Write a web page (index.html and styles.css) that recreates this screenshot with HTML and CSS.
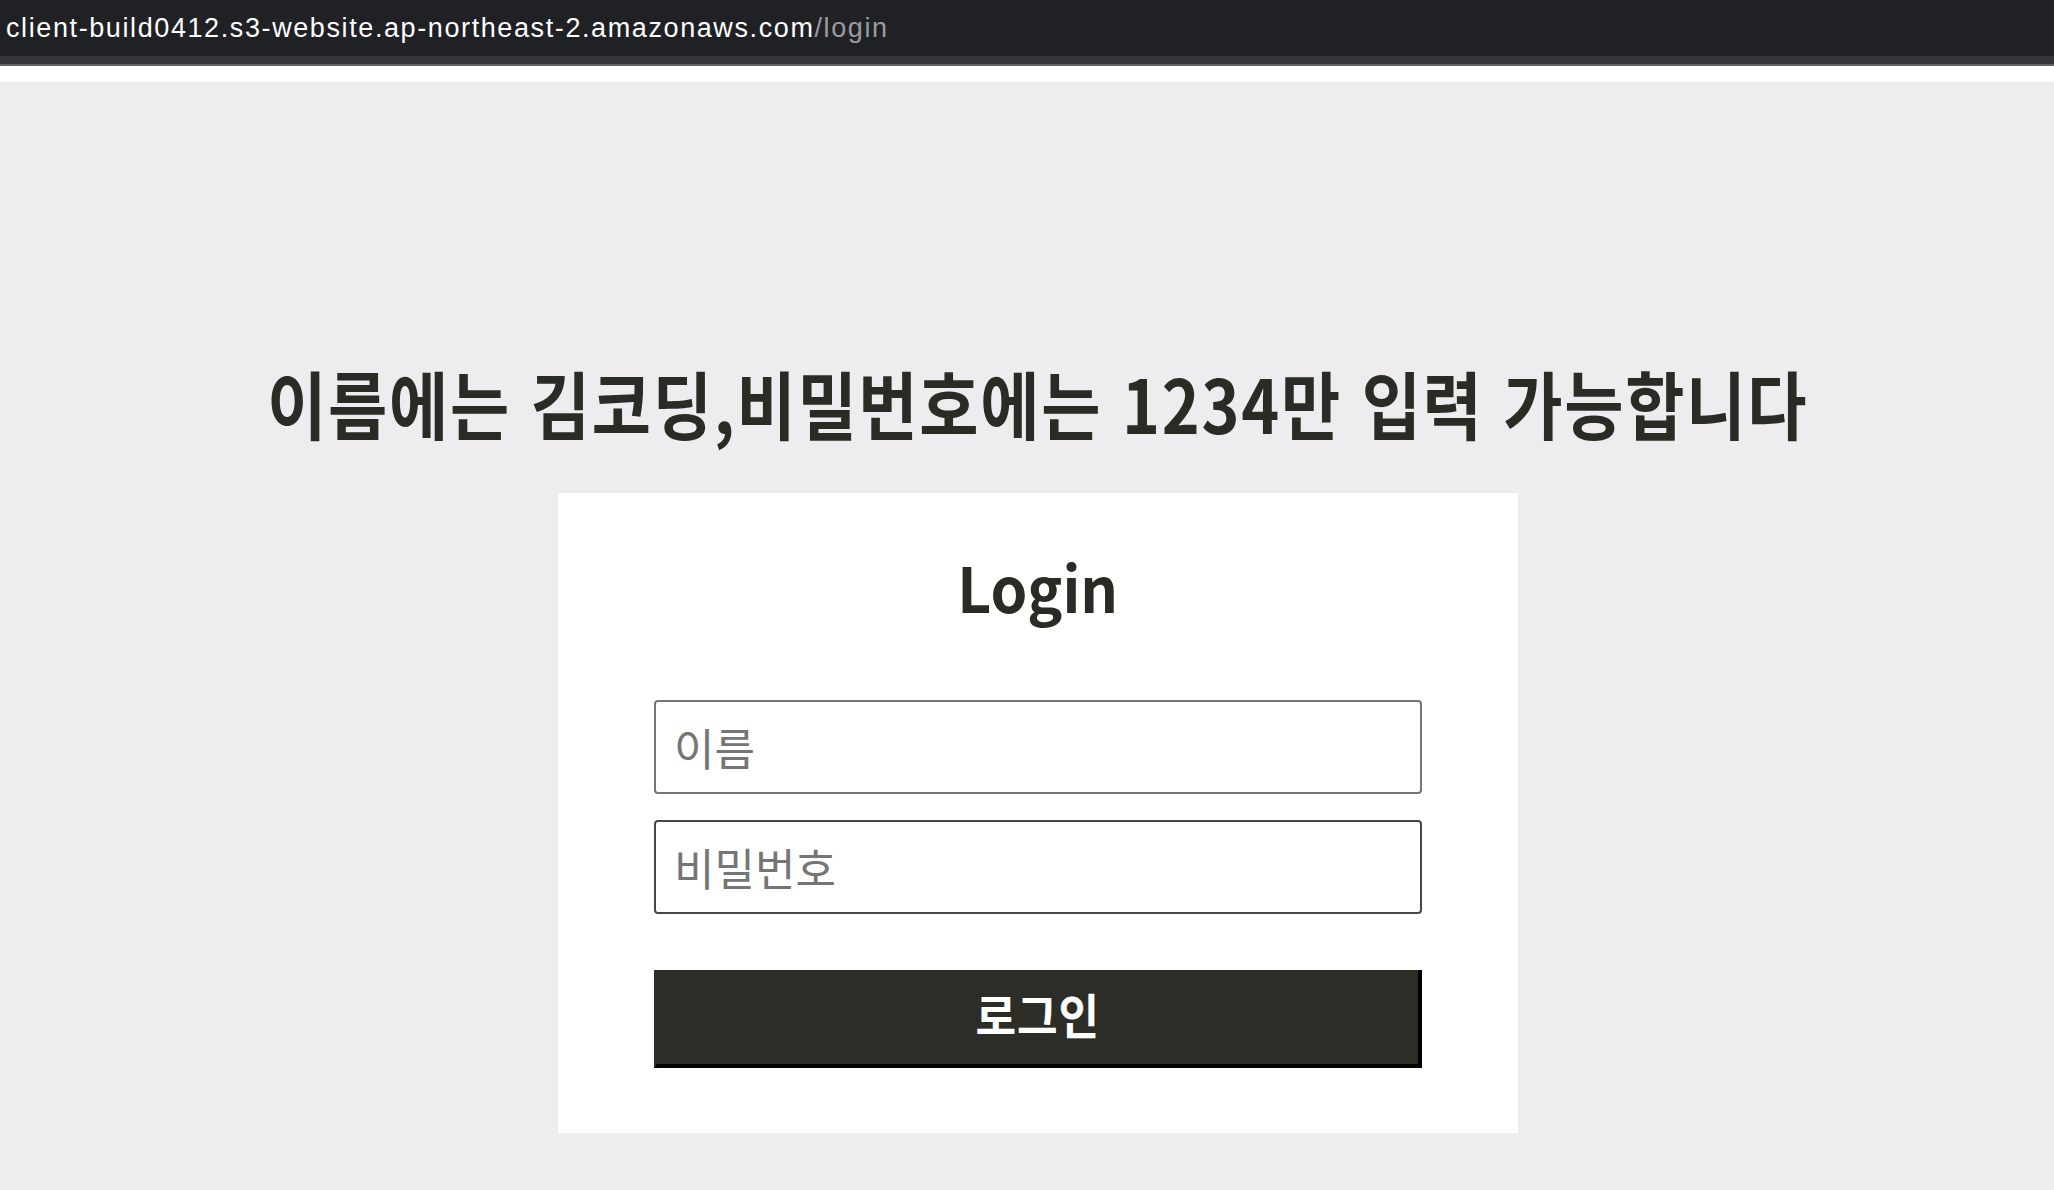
FILE: index.html
```html
<!DOCTYPE html>
<html lang="ko">
<head>
<meta charset="utf-8">
<title>Login</title>
<link rel="stylesheet" href="styles.css">
</head>
<body>
<header class="chrome">
  <div class="urlbar"><span class="host">client-build0412.s3-website.ap-northeast-2.amazonaws.com</span><span class="path">/login</span></div>
  <div class="tabstrip"></div>
  <div class="tabline"></div>
  <div class="whitestrip"></div>
</header>
<main class="page">
  <h1 class="notice"><span class="notice-text">이름에는 김코딩,비밀번호에는 1234만 입력 가능합니다</span></h1>
  <form class="card">
    <h2 class="card-title"><span class="card-title-text">Login</span></h2>
    <input class="field field-name" type="text" placeholder="이름">
    <input class="field field-pass" type="password" placeholder="비밀번호">
    <button class="submit" type="button"><span class="submit-text">로그인</span></button>
  </form>
</main>
</body>
</html>
```

FILE: styles.css
```css
* { box-sizing: border-box; }

html, body {
  margin: 0;
  padding: 0;
  background: #eeecef;
  font-family: "Noto Sans CJK KR", "Noto Sans", sans-serif;
}

.chrome {
  display: flex;
  flex-direction: column;
}

.urlbar {
  height: 56px;
  background: #202124;
  padding-left: 6px;
  display: flex;
  align-items: center;
  font-family: "Liberation Sans", Arial, sans-serif;
  font-size: 27px;
  letter-spacing: 1.6px;
  white-space: nowrap;
}

.host { color: #ffffff; }
.path { color: #9a9ca0; }

.tabstrip {
  height: 8px;
  background: #36373b;
}

.tabline {
  height: 2px;
  background: #5f6063;
}

.whitestrip {
  height: 16px;
  background: #ffffff;
}

.page {
  min-height: 1108px;
  padding: 270px 0 0 22px;
  display: flex;
  flex-direction: column;
  align-items: center;
}

.notice {
  margin: 0;
  height: 100px;
  display: flex;
  align-items: center;
  justify-content: center;
  white-space: nowrap;
  color: #2b2b26;
  font-size: 74px;
  font-weight: 700;
  line-height: 1;
}

.notice-text {
  display: inline-block;
  transform: scaleX(0.87);
  letter-spacing: 2px;
}

.card {
  margin-top: 41px;
  width: 960px;
  background: #ffffff;
  padding: 62px 0 65px;
  display: flex;
  flex-direction: column;
  align-items: center;
}

.card-title {
  margin: 0 0 83px;
  color: #2b2b26;
  font-size: 62px;
  font-weight: 700;
  line-height: 62px;
}

.card-title-text {
  display: inline-block;
  transform: scaleX(0.95);
}

.field {
  width: 768px;
  height: 94px;
  margin: 0;
  padding: 0 18px;
  border: 2px solid #767676;
  border-radius: 4px;
  background: #ffffff;
  font-family: "Noto Sans CJK KR", "Noto Sans", sans-serif;
  font-size: 44px;
  letter-spacing: 0;
  color: #222;
  outline: none;
}

.field::placeholder {
  color: #757575;
}

.field-pass {
  margin-top: 26px;
  border-color: #474747;
}

.submit {
  margin-top: 56px;
  width: 768px;
  height: 98px;
  background: #2d2d28;
  border-style: solid;
  border-width: 0 4px 4px 3px;
  border-color: #2d2d28 #000000 #000000 #2d2d28;
  border-radius: 0;
  padding: 0 0 8px;
  color: #ffffff;
  font-family: "Noto Sans CJK KR", "Noto Sans", sans-serif;
  font-size: 48px;
  font-weight: 700;
  cursor: pointer;
}

.submit-text {
  display: inline-block;
  transform: scaleX(0.92);
  letter-spacing: 1px;
}
```
